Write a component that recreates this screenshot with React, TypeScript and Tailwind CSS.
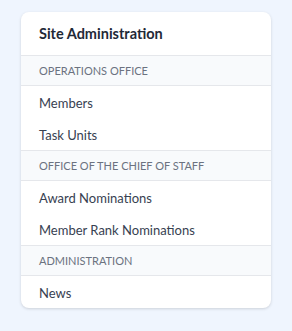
const sections = [
  { title: "Operations Office", items: ["Members", "Task Units"] },
  { title: "Office of the Chief of Staff", items: ["Award Nominations", "Member Rank Nominations"] },
  { title: "Administration", items: ["News"] },
]

export default function App() {
  return (
    <div className="min-h-[331px] bg-[#eff5fe] px-[21px] pt-3 pb-6 font-['Lato',sans-serif]">
      <div className="overflow-hidden rounded-lg bg-white shadow-[0_1px_3px_rgba(0,0,0,0.15)]">
        <div className="flex h-[44px] items-center border-b border-[#e5e7eb] px-[18px]">
          <h2 className="text-[14.5px] font-bold text-[#1f2937]">Site Administration</h2>
        </div>
        {sections.map((s, i) => (
          <div key={s.title} className={i > 0 ? "border-t border-[#e5e7eb]" : ""}>
            <div className="flex h-[30px] items-center border-b border-[#e5e7eb] bg-[#f8fafc] px-[18px] pt-[2px] text-[11px] uppercase text-[#6b7280]">
              {s.title}
            </div>
            {s.items.map((item) => (
              <a key={item} href="#" className="flex h-8 items-center px-[18px] pt-[3px] text-[13px] text-[#374151]">
                {item}
              </a>
            ))}
          </div>
        ))}
      </div>
    </div>
  )
}
